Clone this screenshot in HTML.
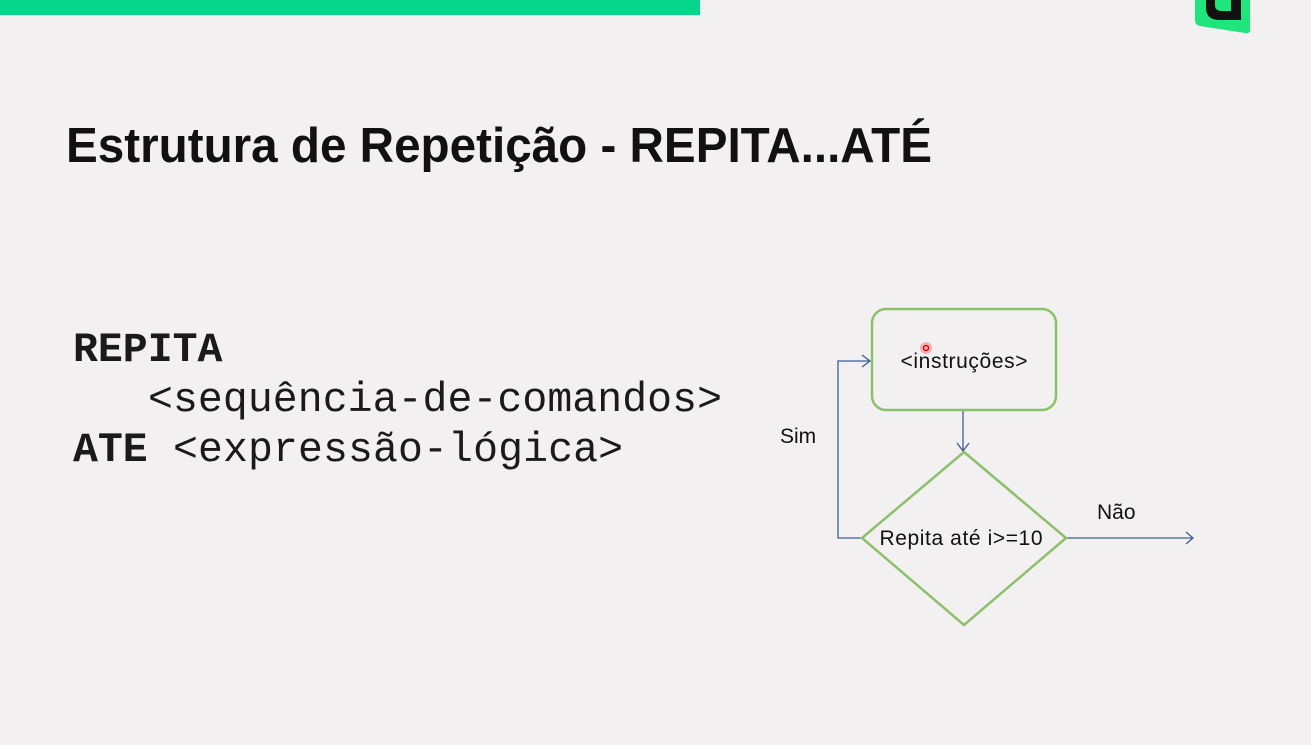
<!DOCTYPE html>
<html><head><meta charset="utf-8"><style>
html,body{margin:0;padding:0;width:1311px;height:745px;overflow:hidden;background:#f2f0f1}
svg{position:absolute;left:0;top:0}
</style></head><body>
<svg width="1311" height="745" viewBox="0 0 1311 745">
<rect x="0" y="0" width="700" height="15" fill="#05d68c"/>
<path d="M1195 0 H1250 V30 Q1250 34 1245 33 L1200 26 Q1195 25 1195 20 Z" fill="#1fe57d"/>
<path d="M1206 0 V8 Q1206 20 1220 20 H1241 V0 H1231 V11 H1222 Q1215 11 1215 5 V0 Z" fill="#111"/>
<text x="66" y="162" font-family="Liberation Sans, sans-serif" font-weight="bold" font-size="49" fill="#111" textLength="866" lengthAdjust="spacingAndGlyphs">Estrutura de Repetição - REPITA...ATÉ</text>
<g font-family="Liberation Mono, monospace" font-size="41.5" fill="#1a1a1a">
<text x="73" y="361" font-weight="bold">REPITA</text>
<text x="148" y="411" textLength="574">&lt;sequência-de-comandos&gt;</text>
<text x="73" y="461" font-weight="bold">ATE</text>
<text x="173" y="461" textLength="450">&lt;expressão-lógica&gt;</text>
</g>
<g fill="none" stroke="#3d5c9c" stroke-width="1.3">
<path d="M862 538 H838 V361 H870 M862 355 L870 361 L862 367"/>
<path d="M963 410 V451 M957 443 L963 451 L969 443"/>
<path d="M1066 538 H1193 M1186 532 L1193 538 L1186 544"/>
</g>
<rect x="872" y="309" width="184" height="101" rx="14" fill="none" stroke="#8cc06a" stroke-width="2.5"/>
<path d="M964 452 L1066 538 L964 625 L862 538 Z" fill="none" stroke="#8cc06a" stroke-width="2.5"/>
<g font-family="Liberation Sans, sans-serif" font-size="21" fill="#111">
<text x="964" y="368" text-anchor="middle" textLength="127">&lt;instruções&gt;</text>
<text x="961" y="545" text-anchor="middle" textLength="163">Repita até i&gt;=10</text>
<text x="780" y="443">Sim</text>
<text x="1097" y="519">Não</text>
</g>
<circle cx="926" cy="348" r="6" fill="#f4a0a0" opacity="0.8"/>
<circle cx="926" cy="348" r="2.5" fill="none" stroke="#c00" stroke-width="1.3"/>
</svg>
</body></html>
